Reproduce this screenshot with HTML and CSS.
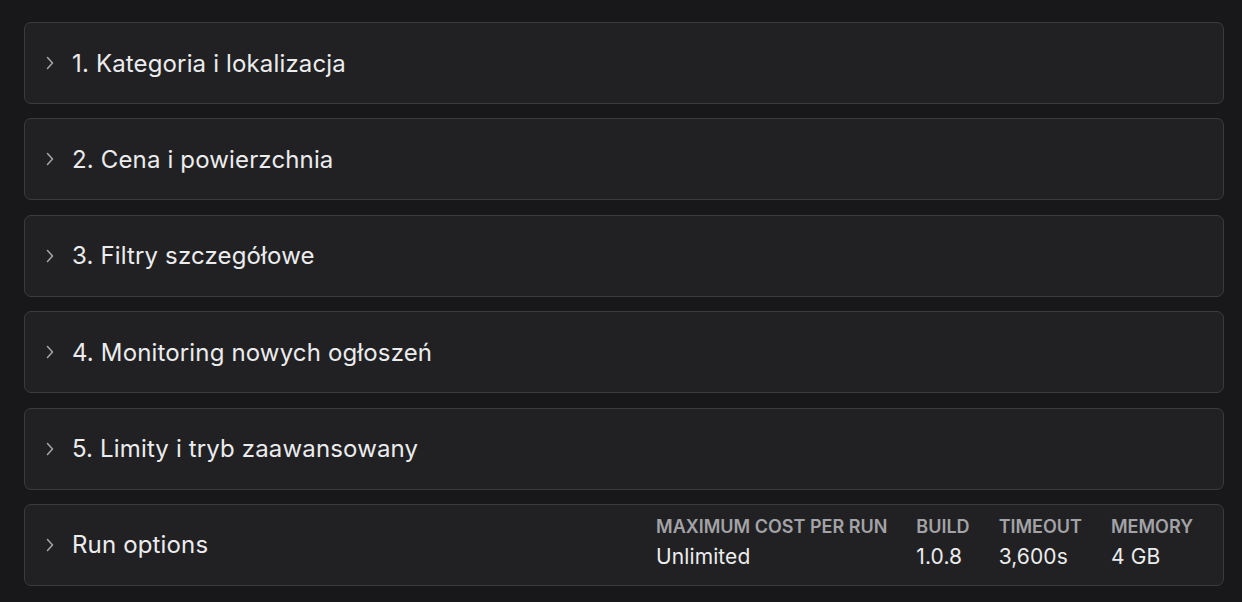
FILE: index.html
```html
<!DOCTYPE html>
<html>
<head>
    <title>Input</title>
    <link rel="stylesheet" href="styles.css">
</head>
<body>

<div class="sections">
    <div class="section">
        <svg class="chevron" viewBox="0 0 10 14"><path d="M2.5 1.5 L7.5 7 L2.5 12.5"/></svg>
        <span class="title">1. Kategoria i lokalizacja</span>
    </div>
    <div class="section">
        <svg class="chevron" viewBox="0 0 10 14"><path d="M2.5 1.5 L7.5 7 L2.5 12.5"/></svg>
        <span class="title">2. Cena i powierzchnia</span>
    </div>
    <div class="section">
        <svg class="chevron" viewBox="0 0 10 14"><path d="M2.5 1.5 L7.5 7 L2.5 12.5"/></svg>
        <span class="title">3. Filtry szczegółowe</span>
    </div>
    <div class="section">
        <svg class="chevron" viewBox="0 0 10 14"><path d="M2.5 1.5 L7.5 7 L2.5 12.5"/></svg>
        <span class="title">4. Monitoring nowych ogłoszeń</span>
    </div>
    <div class="section">
        <svg class="chevron" viewBox="0 0 10 14"><path d="M2.5 1.5 L7.5 7 L2.5 12.5"/></svg>
        <span class="title">5. Limity i tryb zaawansowany</span>
    </div>
    <div class="section">
        <svg class="chevron" viewBox="0 0 10 14"><path d="M2.5 1.5 L7.5 7 L2.5 12.5"/></svg>
        <span class="title">Run options</span>
        <div class="run-stats">
            <div class="stat">
                <div class="label">Maximum cost per run</div>
                <div class="value">Unlimited</div>
            </div>
            <div class="stat">
                <div class="label">Build</div>
                <div class="value">1.0.8</div>
            </div>
            <div class="stat">
                <div class="label">Timeout</div>
                <div class="value">3,600s</div>
            </div>
            <div class="stat">
                <div class="label">Memory</div>
                <div class="value">4 GB</div>
            </div>
        </div>
    </div>
</div>

</body>
</html>
```

FILE: styles.css
```css
body {
    background-color: #18181a;
    margin: 0;
    font-family: 'Inter', 'Liberation Sans', sans-serif;
    color: #ececee;
}
.sections {
    display: flex;
    flex-direction: column;
    gap: 14.4px;
    padding: 22px 18px 0 24px;
}
.section {
    display: flex;
    align-items: center;
    height: 82px;
    box-sizing: border-box;
    padding: 0 30px 0 20px;
    background-color: #212123;
    border: 1.5px solid #3b3b3e;
    border-radius: 7px;
}
.chevron {
    width: 10px;
    height: 14px;
    margin-right: 17px;
    fill: none;
    stroke: #a6a6aa;
    stroke-width: 1.5;
    stroke-linecap: round;
    stroke-linejoin: round;
}
.title {
    font-size: 24px;
    font-weight: 400;
    letter-spacing: 0.15px;
}
.run-stats {
    margin-left: auto;
    display: flex;
    gap: 29px;
    padding-bottom: 4px;
}
.stat .label {
    font-size: 18px;
    font-weight: 600;
    text-transform: uppercase;
    color: #a3a3a7;
    margin-bottom: 7px;
}
.stat .value {
    font-size: 21px;
    letter-spacing: 0.1px;
    color: #ececee;
}
```
